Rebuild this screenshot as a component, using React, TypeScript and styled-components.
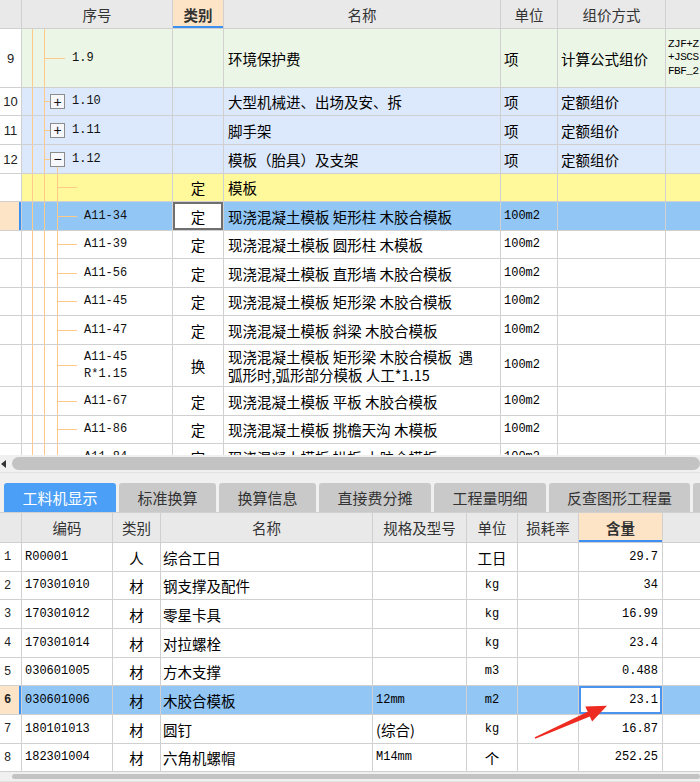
import React from 'react'
import styled, { createGlobalStyle } from 'styled-components'

const CJK = `"Noto Sans CJK SC", "Liberation Sans", sans-serif`
const MONO = `"Liberation Mono", "Noto Sans CJK SC", monospace`
const GRID = '#d0d0d0'
const TREE = '#ffc98a'

const GlobalStyle = createGlobalStyle`
	html, body { margin: 0; padding: 0; background: #fff; }
	body { font-family: ${CJK}; color: #000; }
	* { box-sizing: border-box; }
`

const TOP_COLS = '22px 151px 51px 277px 57px 108px 60px'
const BOTTOM_COLS = '22px 91px 48px 212px 94px 51px 61px 84px 60px'

type TreeKind = 'leaf' | 'closed' | 'open' | 'child'

interface TopRowData {
	no?: string
	code?: string
	code2?: string
	kind: TreeKind
	type?: string
	name: React.ReactNode
	unit?: string
	method?: string
	extra?: string[]
	h: number
	bg: string
	selected?: boolean
}

const GREEN = '#ecf6e6'
const BLUE = '#dce8fb'
const YELLOW = '#fff99b'
const SELECTED = '#91c6f5'

const topRows: TopRowData[] = [
	{ no: '9', code: '1.9', kind: 'leaf', name: '环境保护费', unit: '项', method: '计算公式组价', extra: ['ZJF+Z', '+JSCS', 'FBF_2'], h: 59, bg: GREEN },
	{ no: '10', code: '1.10', kind: 'closed', name: '大型机械进、出场及安、拆', unit: '项', method: '定额组价', h: 28, bg: BLUE },
	{ no: '11', code: '1.11', kind: 'closed', name: '脚手架', unit: '项', method: '定额组价', h: 29, bg: BLUE },
	{ no: '12', code: '1.12', kind: 'open', name: '模板（胎具）及支架', unit: '项', method: '定额组价', h: 29, bg: BLUE },
	{ kind: 'child', type: '定', name: '模板', h: 28, bg: YELLOW },
	{ code: 'A11-34', kind: 'child', type: '定', name: '现浇混凝土模板 矩形柱 木胶合模板', unit: '100m2', h: 29, bg: SELECTED, selected: true },
	{ code: 'A11-39', kind: 'child', type: '定', name: '现浇混凝土模板 圆形柱 木模板', unit: '100m2', h: 28, bg: '#fff' },
	{ code: 'A11-56', kind: 'child', type: '定', name: '现浇混凝土模板 直形墙 木胶合模板', unit: '100m2', h: 29, bg: '#fff' },
	{ code: 'A11-45', kind: 'child', type: '定', name: '现浇混凝土模板 矩形梁 木胶合模板', unit: '100m2', h: 28, bg: '#fff' },
	{ code: 'A11-47', kind: 'child', type: '定', name: '现浇混凝土模板 斜梁 木胶合模板', unit: '100m2', h: 29, bg: '#fff' },
	{ code: 'A11-45', code2: 'R*1.15', kind: 'child', type: '换', name: <>现浇混凝土模板 矩形梁 木胶合模板&nbsp;&nbsp;遇<br />弧形时,弧形部分模板 人工*1.15</>, unit: '100m2', h: 42, bg: '#fff' },
	{ code: 'A11-67', kind: 'child', type: '定', name: '现浇混凝土模板 平板 木胶合模板', unit: '100m2', h: 29, bg: '#fff' },
	{ code: 'A11-86', kind: 'child', type: '定', name: '现浇混凝土模板 挑檐天沟 木模板', unit: '100m2', h: 28, bg: '#fff' },
	{ code: 'A11-84', kind: 'child', type: '定', name: '现浇混凝土模板 拱板 木胶合模板', unit: '100m2', h: 28, bg: '#fff' },
]

interface BottomRowData {
	code: string
	type: string
	name: string
	spec?: string
	specMono?: boolean
	unit: string
	unitMono?: boolean
	qty: string
	h: number
	selected?: boolean
}

const bottomRows: BottomRowData[] = [
	{ code: 'R00001', type: '人', name: '综合工日', unit: '工日', qty: '29.7', h: 29 },
	{ code: '170301010', type: '材', name: '钢支撑及配件', unit: 'kg', unitMono: true, qty: '34', h: 28 },
	{ code: '170301012', type: '材', name: '零星卡具', unit: 'kg', unitMono: true, qty: '16.99', h: 29 },
	{ code: '170301014', type: '材', name: '对拉螺栓', unit: 'kg', unitMono: true, qty: '23.4', h: 29 },
	{ code: '030601005', type: '材', name: '方木支撑', unit: 'm3', unitMono: true, qty: '0.488', h: 28 },
	{ code: '030601006', type: '材', name: '木胶合模板', spec: '12mm', specMono: true, unit: 'm2', unitMono: true, qty: '23.1', h: 29, selected: true },
	{ code: '180101013', type: '材', name: '圆钉', spec: '(综合)', unit: 'kg', unitMono: true, qty: '16.87', h: 29 },
	{ code: '182301004', type: '材', name: '六角机螺帽', spec: 'M14mm', specMono: true, unit: '个', qty: '252.25', h: 28 },
]

const tabs = ['工料机显示', '标准换算', '换算信息', '直接费分摊', '工程量明细', '反查图形工程量', '说明信息']
const tabWidths = [112, 97, 97, 112, 112, 141, 100]

export default function App() {
	return (
		<Page>
			<GlobalStyle />
			<TopPanel>
				<Row $cols={TOP_COLS} $h={29} $bg="#e9e9e9">
					<HeadCell />
					<HeadCell>序号</HeadCell>
					<HeadCell $active>类别</HeadCell>
					<HeadCell>名称</HeadCell>
					<HeadCell>单位</HeadCell>
					<HeadCell>组价方式</HeadCell>
					<HeadCell />
				</Row>
				{topRows.map((r, i) => (
					<Row key={i} $cols={TOP_COLS} $h={r.h} $bg={r.bg}>
						<IndexCell $selected={r.selected}>{r.no}</IndexCell>
						<TreeCell>
							<TreeLines kind={r.kind} />
							<TreeContent $indent={r.kind === 'child' ? 62 : r.kind === 'leaf' ? 50 : 28}>
								{(r.kind === 'closed' || r.kind === 'open') && <Toggle>{r.kind === 'closed' ? '+' : '−'}</Toggle>}
								<Code>
									{r.code}
									{r.code2 && <><br />{r.code2}</>}
								</Code>
							</TreeContent>
						</TreeCell>
						<Cell $align="center" $editing={r.selected}>{r.type}</Cell>
						<Cell $pad={4} $wrap={typeof r.name !== 'string'}>{r.name}</Cell>
						<Cell $mono={r.unit === '100m2'}>{r.unit}</Cell>
						<Cell>{r.method}</Cell>
						<Cell $pad={2}>
							{r.extra && (
								<Extra>
									{r.extra.map(t => <div key={t}>{t}</div>)}
								</Extra>
							)}
						</Cell>
					</Row>
				))}
			</TopPanel>
			<ScrollBar $h={18}>
				<ArrowLeft />
				<Thumb />
			</ScrollBar>
			<TabStrip>
				{tabs.map((t, i) => (
					<Tab key={t} $active={i === 0} style={{ width: tabWidths[i] }}>{t}</Tab>
				))}
			</TabStrip>
			<BottomPanel>
				<Row $cols={BOTTOM_COLS} $h={30} $bg="#e9e9e9">
					<HeadCell />
					<HeadCell>编码</HeadCell>
					<HeadCell>类别</HeadCell>
					<HeadCell>名称</HeadCell>
					<HeadCell>规格及型号</HeadCell>
					<HeadCell>单位</HeadCell>
					<HeadCell>损耗率</HeadCell>
					<HeadCell $active>含量</HeadCell>
					<HeadCell />
				</Row>
				{bottomRows.map((r, i) => (
					<Row key={r.code} $cols={BOTTOM_COLS} $h={r.h} $bg={r.selected ? SELECTED : '#fff'}>
						<IndexCell $selected={r.selected} $serif>{i + 1}</IndexCell>
						<Cell $mono>{r.code}</Cell>
						<Cell $align="center">{r.type}</Cell>
						<Cell $pad={2}>{r.name}</Cell>
						<Cell $mono={r.specMono}>{r.spec}</Cell>
						<Cell $align="center" $mono={r.unitMono}>{r.unit}</Cell>
						<Cell />
						<Cell $align="right" $mono $pad={4} $focus={r.selected}>{r.qty}</Cell>
						<Cell />
					</Row>
				))}
			</BottomPanel>
			<ScrollBar $h={10}>
				<Thumb />
			</ScrollBar>
			<Pointer width="700" height="782" viewBox="0 0 700 782">
				<polygon
					points="534.8,737.3 587.7,711.8 585.3,706.6 607,705.8 592.1,721.6 589.8,716.6 535.3,738.7"
					fill="#ee2b20"
				/>
			</Pointer>
		</Page>
	)
}

const TreeLines: React.FC<{ kind: TreeKind }> = ({ kind }) => (
	<LinesSvg>
		<line x1="10.5" y1="0" x2="10.5" y2="100%" />
		<line x1="22.5" y1="0" x2="22.5" y2="100%" />
		{kind === 'leaf' && <line x1="22.5" y1="50%" x2="43" y2="50%" />}
		{(kind === 'closed' || kind === 'open') && <line x1="22.5" y1="50%" x2="30" y2="50%" />}
		{kind === 'open' && <line x1="35.5" y1="50%" x2="35.5" y2="100%" />}
		{kind === 'child' && (
			<>
				<line x1="35.5" y1="0" x2="35.5" y2="100%" />
				<line x1="35.5" y1="50%" x2="55" y2="50%" />
			</>
		)}
	</LinesSvg>
)

const Page = styled.div`
	position: relative;
	width: 700px;
	height: 782px;
	overflow: hidden;
	display: flex;
	flex-direction: column;
	background: #f0f0f0;
`

const TopPanel = styled.div`
	height: 455px;
	overflow: hidden;
	background: #fff;
	flex-shrink: 0;
`

interface RowProps {
	$cols: string
	$h: number
	$bg: string
}
const Row = styled.div<RowProps>`
	display: grid;
	grid-template-columns: ${p => p.$cols};
	height: ${p => p.$h}px;
	background: ${p => p.$bg};
	border-bottom: 1px solid ${GRID};
	flex-shrink: 0;
`

const HeadCell = styled.div<{ $active?: boolean }>`
	display: flex;
	align-items: center;
	justify-content: center;
	border-right: 1px solid ${GRID};
	font-size: 14.5px;
	color: #333;
	font-weight: ${p => (p.$active ? 700 : 400)};
	background: ${p => (p.$active ? '#fde4c6' : 'transparent')};
	box-shadow: ${p => (p.$active ? 'inset 0 -2px 0 #3d8ff2' : 'none')};
	white-space: nowrap;
	overflow: hidden;
`

const IndexCell = styled.div<{ $selected?: boolean; $serif?: boolean }>`
	display: flex;
	align-items: center;
	justify-content: ${p => (p.$serif ? 'flex-start' : 'center')};
	padding-left: ${p => (p.$serif ? 4 : 0)}px;
	border-right: 1px solid ${GRID};
	background: ${p => (p.$selected ? '#fde4c6' : '#fff')};
	box-shadow: ${p => (p.$selected ? 'inset -2px 0 0 #3d8ff2' : 'none')};
	font-family: ${p => (p.$serif ? MONO : '"Liberation Sans", sans-serif')};
	font-size: ${p => (p.$serif ? 12 : 13)}px;
	font-weight: ${p => (p.$selected ? 700 : 400)};
	color: #222;
`

interface CellProps {
	$align?: 'left' | 'center' | 'right'
	$mono?: boolean
	$pad?: number
	$wrap?: boolean
	$editing?: boolean
	$focus?: boolean
}
const Cell = styled.div<CellProps>`
	display: flex;
	align-items: center;
	justify-content: ${p => (p.$align === 'center' ? 'center' : p.$align === 'right' ? 'flex-end' : 'flex-start')};
	padding: 0 ${p => p.$pad ?? 3}px;
	border-right: 1px solid ${GRID};
	font-family: ${p => (p.$mono ? MONO : CJK)};
	font-size: ${p => (p.$mono ? 12 : 14.5)}px;
	line-height: ${p => (p.$wrap ? 18 : 17)}px;
	white-space: ${p => (p.$wrap ? 'normal' : 'nowrap')};
	overflow: hidden;
	min-width: 0;
	${p => p.$editing && `
		background: #fff;
		box-shadow: inset 0 0 0 2px #6f6f6f;
	`}
	${p => p.$focus && `
		background: #fff;
		box-shadow: inset 0 0 0 2px #4a93ee;
	`}
`

const TreeCell = styled.div`
	position: relative;
	border-right: 1px solid ${GRID};
	overflow: hidden;
`

const LinesSvg = styled.svg`
	position: absolute;
	inset: 0;
	width: 100%;
	height: 100%;
	stroke: ${TREE};
	stroke-width: 1;
	shape-rendering: crispEdges;
`

const TreeContent = styled.div<{ $indent: number }>`
	position: relative;
	display: flex;
	align-items: center;
	gap: 7px;
	height: 100%;
	padding-left: ${p => p.$indent}px;
`

const Toggle = styled.span`
	width: 15px;
	height: 15px;
	flex-shrink: 0;
	display: flex;
	align-items: center;
	justify-content: center;
	border: 1px solid #8c8c8c;
	background: #f6f8fc;
	font-family: "Liberation Sans", sans-serif;
	font-size: 14px;
	line-height: 1;
	color: #111;
`

const Code = styled.span`
	font-family: ${MONO};
	font-size: 12px;
	line-height: 17px;
	color: #111;
	white-space: nowrap;
`

const Extra = styled.div`
	font-family: ${MONO};
	font-size: 11px;
	line-height: 13.5px;
	white-space: nowrap;
	letter-spacing: -0.5px;
`

const ScrollBar = styled.div<{ $h: number }>`
	position: relative;
	height: ${p => p.$h}px;
	flex-shrink: 0;
	display: flex;
	align-items: center;
	padding: 0 0 0 12px;
	background: #f0f0f0;
	border-bottom: 1px solid #e2e2e2;
`

const ArrowLeft = styled.span`
	position: absolute;
	left: 1px;
	top: 50%;
	margin-top: -4px;
	border-top: 4px solid transparent;
	border-bottom: 4px solid transparent;
	border-right: 5px solid #333;
`

const Thumb = styled.div`
	flex: 1;
	height: calc(100% - 4px);
	border-radius: 7px;
	background: #c3c3c3;
`

const TabStrip = styled.div`
	height: 40px;
	flex-shrink: 0;
	display: flex;
	align-items: flex-end;
	gap: 3px;
	padding-left: 4px;
	background: #f0f0f0;
	overflow: hidden;
	border-bottom: 1px solid ${GRID};
`

const Tab = styled.div<{ $active?: boolean }>`
	height: 29px;
	flex-shrink: 0;
	display: flex;
	align-items: center;
	justify-content: center;
	border-radius: 3px 3px 0 0;
	font-size: 15px;
	white-space: nowrap;
	background: ${p => (p.$active ? '#4b9ff7' : '#c9c9c9')};
	color: ${p => (p.$active ? '#fff' : '#333')};
`

const BottomPanel = styled.div`
	background: #fff;
	flex-shrink: 0;
`

const Pointer = styled.svg`
	position: absolute;
	left: 0;
	top: 0;
	pointer-events: none;
`
